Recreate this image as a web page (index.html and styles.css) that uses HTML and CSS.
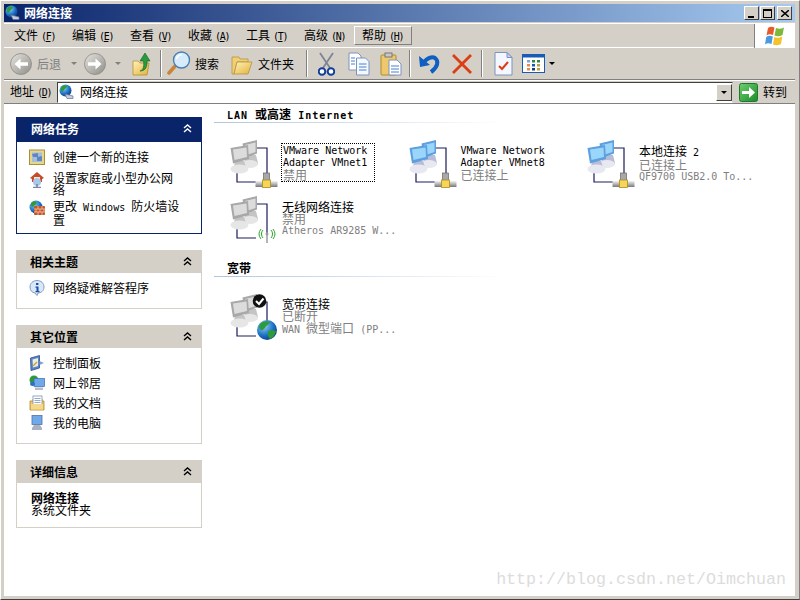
FILE: index.html
```html
<!DOCTYPE html>
<html lang="zh-CN">
<head>
<meta charset="utf-8">
<title>网络连接</title>
<link rel="stylesheet" href="styles.css">
</head>
<body>
<svg class="defs" xmlns="http://www.w3.org/2000/svg">
  <defs>
    <linearGradient id="gBall" x1="0" y1="0" x2="1" y2="1"><stop offset="0" stop-color="#e6e4de"/><stop offset="1" stop-color="#8f8d88"/></linearGradient>
    <linearGradient id="gFold" x1="0" y1="0" x2="1" y2="1"><stop offset="0" stop-color="#fff3b8"/><stop offset="1" stop-color="#e2b13c"/></linearGradient>
    <linearGradient id="gBar" x1="0" y1="0" x2="0" y2="1"><stop offset="0" stop-color="#f2f2f2"/><stop offset="1" stop-color="#777"/></linearGradient>
    <radialGradient id="gGlobe" cx=".35" cy=".3" r=".8"><stop offset="0" stop-color="#8fd0f5"/><stop offset=".6" stop-color="#1b6fc4"/><stop offset="1" stop-color="#0b3578"/></radialGradient>
    <linearGradient id="gGo" x1="0" y1="0" x2="1" y2="1"><stop offset="0" stop-color="#6fcf6f"/><stop offset="1" stop-color="#1a8a2a"/></linearGradient>

    <symbol id="pc" viewBox="0 0 48 48">
      <path d="M27 8H37V36M7 32V42H26" fill="none" stroke="#1c1c5c" stroke-width="1.2"/>
      <path d="M16 15h10l2 8c-1 4-11 5-14 1z" class="base"/>
      <ellipse cx="20" cy="24" rx="8" ry="4" class="base-lite"/>
      <path d="M12.500 3.500 27 0V13.500L15 18z" class="scr-edge"/>
      <path d="M15 5 25.500 2.500V12L16.500 15z" class="scr"/>
      <path d="M5 21h9l2 6c-2 3-10 3-12 0z" class="base"/>
      <ellipse cx="9.500" cy="29" rx="9" ry="4.500" class="base-lite"/>
      <path d="M0.500 8 18 5 19 19 3 23.500z" class="scr-edge"/>
      <path d="M3 9.500 16.500 7.500 17 17 4.500 20z" class="scr"/>
    </symbol>
    <symbol id="tee" viewBox="0 0 48 48">
      <rect x="33.500" y="33" width="6" height="9" fill="#a8a8a8" stroke="#666" stroke-width=".7"/>
      <rect x="25.500" y="41" width="22" height="6" fill="url(#gBar)"/>
      <rect x="32.500" y="40" width="8" height="7.500" fill="#f5d65a" stroke="#b08a1c" stroke-width=".8"/>
    </symbol>

    <symbol id="netconn" viewBox="0 0 16 16">
      <circle cx="6.500" cy="6.500" r="6" fill="url(#gGlobe)"/>
      <path d="M3 2c2-1 4-1 5 0 0 2-2 2-3 4-1 1-1 2-2 2-1-1-2-3 0-6z" fill="#2f9a3a"/>
      <path d="M6 10 14 12v2.500H8z" fill="#c5cbe0" stroke="#66708c" stroke-width=".7"/>
    </symbol>
    <symbol id="chev" viewBox="0 0 9 9">
      <path d="M1 4 4.500 1 8 4M1 8 4.500 5 8 8" fill="none" stroke="currentColor" stroke-width="1.400"/>
    </symbol>
    <symbol id="iNew" viewBox="0 0 16 16">
      <rect x=".5" y="1" width="15" height="14.500" fill="#e8d58e" stroke="#a88f3e"/>
      <rect x="3" y="3.500" width="10" height="9.500" fill="#a6bfd8"/>
      <path d="M3 5 9 4v4H4zM8 8l5-1v5H8z" fill="#5d87c4"/>
    </symbol>
    <symbol id="iHome" viewBox="0 0 16 16">
      <path d="M8 0 15 6 13 7V10H3V7L1 6z" fill="#c84a28"/>
      <rect x="5" y="5" width="6" height="5" fill="#f6e9d2"/>
      <circle cx="8" cy="10" r="4" fill="#a8c8ea"/>
      <path d="M8 12v3M4 15.500h8" stroke="#7a86a0" stroke-width="1.600"/>
    </symbol>
    <symbol id="iFw" viewBox="0 0 16 16">
      <circle cx="7" cy="7" r="6.500" fill="url(#gGlobe)"/>
      <path d="M3 2c2-1 4-1 5 1-1 2-3 2-4 4-2 0-3-3-1-5z" fill="#2f9a3a"/>
      <rect x="5" y="6" width="11" height="9" rx="1" fill="#c2552c"/>
      <path d="M5 9h11M5 12h11M9 6v3M13 6v3M7 9v3M11 9v3M15 9v3M9 12v3M13 12v3" stroke="#f2c9a6" stroke-width=".8"/>
    </symbol>
    <symbol id="iInfo" viewBox="0 0 16 16">
      <path d="M8 .5c4 0 7 2.700 7 6.500s-3 6-6 6l-1 2.500L6 13C3 12.500 1 10.500 1 7 1 3.200 4 .5 8 .5z" fill="#d9e7f7" stroke="#7c9cc6"/>
      <rect x="7" y="3" width="2.400" height="2" fill="#1d4fa8"/>
      <path d="M6.500 6.500h3V11h1v1.200h-4V11h1V7.700h-1z" fill="#1d4fa8"/>
    </symbol>
    <symbol id="iCtl" viewBox="0 0 16 16">
      <path d="M1.500 3 10.500 .5V13L2 15.500z" fill="#5d84c4" stroke="#2e4f8c" stroke-width=".8"/>
      <path d="M3.500 4.500 9 3V11L4 12.500z" fill="#e9efe0"/>
      <path d="M4 11 8 7" stroke="#c9a43a" stroke-width="1.500"/>
      <path d="M10.500 6 15 8 10.500 10z" fill="#7ea2d8"/>
    </symbol>
    <symbol id="iNet" viewBox="0 0 16 16">
      <circle cx="5" cy="5" r="4.500" fill="#2f9a3a"/>
      <rect x="5" y="3.500" width="10.500" height="8" fill="#6fa9ea" stroke="#3c6bb0" stroke-width=".7"/>
      <path d="M6 12.500h8v2.500H6z" fill="#b6bccb"/>
      <ellipse cx="3.500" cy="9" rx="2.500" ry="2" fill="#2a6fc8"/>
    </symbol>
    <symbol id="iDoc" viewBox="0 0 16 16">
      <path d="M1 6h3V4h9v2h2v9H1z" fill="#eec86c" stroke="#b08a2a" stroke-width=".8"/>
      <rect x="4" y="1" width="9" height="9" fill="#fff" stroke="#7d93b8" stroke-width=".8"/>
      <path d="M5.500 3.500h6M5.500 5.500h6M5.500 7.500h6" stroke="#7d93b8" stroke-width=".8"/>
      <rect x="2" y="9" width="12" height="5.500" fill="#f4d98d"/>
    </symbol>
    <symbol id="iPc" viewBox="0 0 16 16">
      <rect x="3" y=".5" width="10" height="9" fill="#6fa9ea" stroke="#56709c" stroke-width=".8"/>
      <path d="M5 10h6l2 3v2H3v-2z" fill="#aab2c4"/>
    </symbol>

    <symbol id="tbBack" viewBox="0 0 22 22">
      <circle cx="11" cy="11" r="10.500" fill="url(#gBall)" stroke="#8b8984" stroke-width=".8"/>
      <path d="M18 9.300H10.500V5.500L4.500 11l6 5.500v-3.800H18z" fill="#fff"/>
    </symbol>
    <symbol id="tbFwd" viewBox="0 0 22 22">
      <circle cx="11" cy="11" r="10.500" fill="url(#gBall)" stroke="#8b8984" stroke-width=".8"/>
      <path d="M4 9.300h7.500V5.500l6 5.500-6 5.500v-3.800H4z" fill="#fff"/>
    </symbol>
    <symbol id="tbUp" viewBox="0 0 19 24">
      <path d="M1 9h5l2 2h9L15 23H1z" fill="url(#gFold)" stroke="#b88f2c" stroke-width=".8"/>
      <path d="M8 19C12 18 12 13 11.500 9H8L13 1l5 8h-3c.5 5-1 10-7 10z" fill="#2a9a3c" stroke="#145f22" stroke-width=".6"/>
    </symbol>
    <symbol id="tbSearch" viewBox="0 0 24 25">
      <path d="M9 14 2 22" stroke="#c88438" stroke-width="3.500" stroke-linecap="round"/>
      <circle cx="14.500" cy="9" r="8" fill="#d6ecfb" stroke="#4a7fb6" stroke-width="1.400"/>
      <path d="M9.500 8a5 5 0 0 1 5-4" fill="none" stroke="#fff" stroke-width="1.600"/>
    </symbol>
    <symbol id="tbFolder" viewBox="0 0 22 22">
      <path d="M1 4h7l1 2h8v3H6L3 21H1z" fill="#f0d076" stroke="#b8923a" stroke-width=".8"/>
      <path d="M6 9h15l-4 12H3z" fill="url(#gFold)" stroke="#b8923a" stroke-width=".8"/>
    </symbol>
    <symbol id="tbCut" viewBox="0 0 17 24">
      <path d="M2 1 12 16M15 1 5 16" stroke="#7d8593" stroke-width="1.800"/>
      <circle cx="4" cy="19.500" r="3.300" fill="#fff" stroke="#123f9c" stroke-width="2"/>
      <circle cx="13" cy="19.500" r="3.300" fill="#fff" stroke="#123f9c" stroke-width="2"/>
    </symbol>
    <symbol id="tbCopy" viewBox="0 0 22 24">
      <path d="M1 1h9l3 3v14H1z" fill="#fff" stroke="#7d93bf"/>
      <path d="M8.500 6h9l3.500 3.500V23H8.500z" fill="#f4f8ff" stroke="#7d93bf"/>
      <path d="M11 12h7.500M11 15h7.500M11 18h7.500" stroke="#4b7fd0"/>
      <path d="M3 6h4M3 9h4M3 12h4" stroke="#4b7fd0"/>
    </symbol>
    <symbol id="tbPaste" viewBox="0 0 22 24">
      <rect x="1" y="3" width="15" height="20" rx="1" fill="#eec86c" stroke="#b08a2a"/>
      <rect x="5" y="1" width="7" height="4" fill="#c9c9c9" stroke="#777"/>
      <path d="M9 8h8l4 4v11H9z" fill="#fff" stroke="#7d93bf"/>
      <path d="M11 14h8M11 17h8M11 20h8" stroke="#4b7fd0"/>
    </symbol>
    <symbol id="tbUndo" viewBox="0 0 23 22">
      <path d="M5 10C9 5 14 3 17 5c4 3 3 9-4 14" fill="none" stroke="#0f5fc2" stroke-width="4"/>
      <path d="M1 3 2 14 12 12z" fill="#0f5fc2"/>
    </symbol>
    <symbol id="tbX" viewBox="0 0 22 22">
      <path d="M2 2 20 20M20 2 2 20" stroke="#dc3d12" stroke-width="2.800"/>
    </symbol>
    <symbol id="tbProps" viewBox="0 0 19 24">
      <path d="M1 .5h12l5 5V23H1z" fill="#f4f7ff" stroke="#7d93bf"/>
      <path d="M13 .5v5h5z" fill="#c5d3ee" stroke="#7d93bf"/>
      <path d="M5 14l3 3 6-7" fill="none" stroke="#dc3d12" stroke-width="2"/>
    </symbol>
    <symbol id="tbViews" viewBox="0 0 23 19">
      <rect x=".5" y=".5" width="22" height="18" fill="#fff" stroke="#1a5cb4"/>
      <rect x=".5" y=".5" width="22" height="3" fill="#1a5cb4"/>
      <path d="M5 6h3v2.500H5z" fill="#7fa6dc"/><path d="M10 6h3v2.500h-3z" fill="#2c8a3c"/><path d="M15 6h3v2.500h-3z" fill="#2c8a3c"/>
      <path d="M5 10h3v2.500H5z" fill="#e58a4a"/><path d="M10 10h3v2.500h-3z" fill="#1a5cb4"/><path d="M15 10h3v2.500h-3z" fill="#b8a33c"/>
      <path d="M5 14h3v2.500H5z" fill="#e58a4a"/><path d="M10 14h3v2.500h-3z" fill="#1a3a84"/><path d="M15 14h3v2.500h-3z" fill="#b8a33c"/>
    </symbol>
    <symbol id="winlogo" viewBox="0 0 22 20">
      <path d="M4 2C6 .5 8 .5 10.500 1.500L9 9C6.500 8 4.500 8 2.500 9.500z" fill="#e8592c"/>
      <path d="M12 2c2.500 1 5 1 8-.5L18.500 9c-3 1.500-5.500 1.500-8 .5z" fill="#7cb83c"/>
      <path d="M2.200 11C4.200 9.500 6.500 9.500 8.800 10.500L7.500 18C5 17 3 17 1 18.500z" fill="#4a9ae0"/>
      <path d="M10.300 11c2.500 1 5 1 8-.5L17 18c-3 1.500-5.500 1.500-8 .5z" fill="#f4c22c"/>
    </symbol>
  </defs>
</svg>

<div class="window">
  <header class="titlebar">
    <svg class="ico16"><use href="#netconn"/></svg>
    <span class="title-text">网络连接</span>
    <div class="winbtns">
      <span class="winbtn"><span class="g-min"></span></span>
      <span class="winbtn"><span class="g-max"></span></span>
      <span class="winbtn winbtn-close"><svg class="g-x" viewBox="0 0 8 7"><path d="M0 0 8 7M8 0 0 7" stroke="#000" stroke-width="1.500"/></svg></span>
    </div>
  </header>

  <nav class="menubar">
    <span class="menu">文件<span class="lat acc">(<u>F</u>)</span></span>
    <span class="menu">编辑<span class="lat acc">(<u>E</u>)</span></span>
    <span class="menu">查看<span class="lat acc">(<u>V</u>)</span></span>
    <span class="menu">收藏<span class="lat acc">(<u>A</u>)</span></span>
    <span class="menu">工具<span class="lat acc">(<u>T</u>)</span></span>
    <span class="menu">高级<span class="lat acc">(<u>N</u>)</span></span>
    <span class="menu menu-on">帮助<span class="lat acc">(<u>H</u>)</span></span>
    <span class="logo"><svg class="logo-svg"><use href="#winlogo"/></svg></span>
  </nav>

  <div class="toolbar">
    <svg class="t22 m6"><use href="#tbBack"/></svg>
    <span class="tb-label muted m5">后退</span>
    <span class="caret caret-gray m10"></span>
    <svg class="t22 m7"><use href="#tbFwd"/></svg>
    <span class="caret caret-gray m9"></span>
    <svg class="t-up m11"><use href="#tbUp"/></svg>
    <span class="sep m9"></span>
    <svg class="t-search m5"><use href="#tbSearch"/></svg>
    <span class="tb-label m4">搜索</span>
    <svg class="t22 m12"><use href="#tbFolder"/></svg>
    <span class="tb-label m5">文件夹</span>
    <span class="sep m12"></span>
    <svg class="t-cut m10"><use href="#tbCut"/></svg>
    <svg class="t-copy m13"><use href="#tbCopy"/></svg>
    <svg class="t-copy m10"><use href="#tbPaste"/></svg>
    <span class="sep m7"></span>
    <svg class="t-undo m7"><use href="#tbUndo"/></svg>
    <svg class="t22 m10"><use href="#tbX"/></svg>
    <span class="sep m8"></span>
    <svg class="t-up m11"><use href="#tbProps"/></svg>
    <svg class="t-views m9"><use href="#tbViews"/></svg>
    <span class="caret m4"></span>
  </div>

  <div class="addressbar">
    <span class="addr-label">地址<span class="lat acc">(<u>D</u>)</span></span>
    <div class="addr-input">
      <svg class="ico16"><use href="#netconn"/></svg>
      <span class="addr-text">网络连接</span>
      <span class="addr-drop"><span class="caret"></span></span>
    </div>
    <svg class="go-ico" viewBox="0 0 19 19"><rect x=".5" y=".5" width="18" height="18" rx="2" fill="url(#gGo)" stroke="#1d7a2a"/><path d="M3 8h7V4l6 5.500-6 5.500v-4H3z" fill="#fff"/></svg>
    <span class="go-text">转到</span>
  </div>

  <div class="content">
    <aside class="sidebar">
      <section class="panel panel-main">
        <h2 class="panel-head">网络任务<svg class="chev"><use href="#chev"/></svg></h2>
        <div class="panel-body">
          <div class="row"><svg class="ico16"><use href="#iNew"/></svg><span class="row-text">创建一个新的连接</span></div>
          <div class="row row-two"><svg class="ico16"><use href="#iHome"/></svg><span class="row-text">设置家庭或小型办公网络</span></div>
          <div class="row row-two"><svg class="ico16"><use href="#iFw"/></svg><span class="row-text">更改<span class="lat"> Windows </span>防火墙设置</span></div>
        </div>
      </section>
      <section class="panel">
        <h2 class="panel-head">相关主题<svg class="chev"><use href="#chev"/></svg></h2>
        <div class="panel-body">
          <div class="row"><svg class="ico16"><use href="#iInfo"/></svg><span class="row-text">网络疑难解答程序</span></div>
        </div>
      </section>
      <section class="panel">
        <h2 class="panel-head">其它位置<svg class="chev"><use href="#chev"/></svg></h2>
        <div class="panel-body">
          <div class="row"><svg class="ico16"><use href="#iCtl"/></svg><span class="row-text">控制面板</span></div>
          <div class="row"><svg class="ico16"><use href="#iNet"/></svg><span class="row-text">网上邻居</span></div>
          <div class="row"><svg class="ico16"><use href="#iDoc"/></svg><span class="row-text">我的文档</span></div>
          <div class="row"><svg class="ico16"><use href="#iPc"/></svg><span class="row-text">我的电脑</span></div>
        </div>
      </section>
      <section class="panel">
        <h2 class="panel-head">详细信息<svg class="chev"><use href="#chev"/></svg></h2>
        <div class="panel-body details">
          <strong>网络连接</strong>
          <span>系统文件夹</span>
        </div>
      </section>
    </aside>

    <main class="main">
      <h3 class="group-head"><span class="lat">LAN </span>或高速<span class="lat"> Internet</span></h3>
      <div class="tiles">
        <div class="tile">
          <svg class="net-ico net-off"><use href="#pc"/><use href="#tee"/></svg>
          <div class="tile-text focus"><span class="lat">VMware Network Adapter VMnet1</span><span class="sub">禁用</span></div>
        </div>
        <div class="tile">
          <svg class="net-ico net-on"><use href="#pc"/><use href="#tee"/></svg>
          <div class="tile-text"><span class="lat">VMware Network Adapter VMnet8</span><span class="sub">已连接上</span></div>
        </div>
        <div class="tile">
          <svg class="net-ico net-on"><use href="#pc"/><use href="#tee"/></svg>
          <div class="tile-text"><span class="name">本地连接<span class="lat"> 2</span></span><span class="sub">已连接上</span><span class="sub lat">QF9700 USB2.0 To...</span></div>
        </div>
        <div class="tile">
          <svg class="net-ico net-off" viewBox="0 0 48 48"><use href="#pc" width="48" height="48"/>
            <path d="M37 36v2" stroke="#1c1c5c"/>
            <path d="M37 38v9" stroke="#9a9aa8" stroke-width="1.500"/>
            <circle cx="37" cy="38" r="1.500" fill="#9a9aa8"/>
            <path d="M33 34a6 6 0 0 0 0 8M41 34a6 6 0 0 1 0 8M31 33a8 8 0 0 0 0 10M43 33a8 8 0 0 1 0 10" fill="none" stroke="#2aa82a" stroke-width="1"/>
          </svg>
          <div class="tile-text"><span class="name">无线网络连接</span><span class="sub">禁用</span><span class="sub lat">Atheros AR9285 W...</span></div>
        </div>
      </div>

      <h3 class="group-head group-next">宽带</h3>
      <div class="tiles">
        <div class="tile">
          <svg class="net-ico net-off" viewBox="0 0 48 48"><use href="#pc" width="48" height="48"/>
            <circle cx="37" cy="36" r="10" fill="url(#gGlobe)"/>
            <path d="M31 29c3-2 7-2 9-1-1 3-4 3-5 6-2 1-2 3-4 2-3-2-2-5 0-7zM38 37c3-1 6-1 8 0-1 4-3 7-6 8-2-2-3-6-2-8z" fill="#2f9a3a"/>
            <circle cx="29.500" cy="7" r="6.800" fill="#111"/>
            <path d="M26 7l3 3 4.500-5.500" fill="none" stroke="#fff" stroke-width="2"/>
          </svg>
          <div class="tile-text"><span class="name">宽带连接</span><span class="sub">已断开</span><span class="sub"><span class="lat">WAN </span>微型端口<span class="lat"> (PP...</span></span></div>
        </div>
      </div>
      <div class="watermark">http://blog.csdn.net/Oimchuan</div>
    </main>
  </div>
</div>
</body>
</html>
```

FILE: styles.css
```css
* { box-sizing: border-box; }
html, body { margin: 0; padding: 0; }
body {
  width: 800px; height: 600px; overflow: hidden;
  background: #d4d0c8; color: #000;
  font: 12px/12px "Noto Sans CJK SC", sans-serif;
}
svg { display: block; flex: none; }
.defs { width: 0; height: 0; }
.lat { font-family: "DejaVu Sans Mono", monospace; font-size: 10px; line-height: 12px; white-space: pre-wrap; }
.acc { margin-left: 3px; letter-spacing: -1.3px; white-space: pre; }
.ico16 { width: 16px; height: 16px; }

.window {
  width: 800px; height: 600px;
  padding: 4px 4px 3px 3px;
  display: flex; flex-direction: column;
  border-bottom: 1px solid #404040;
  border-right: 1px solid #808080;
  border-top: 1px solid #fff;
  border-left: 1px solid #fff;
}

.titlebar {
  height: 18px; flex: none; margin-top: -1px;
  display: flex; align-items: center; gap: 3px;
  padding: 0 3px 0 1px;
  background: linear-gradient(90deg, #0a246a, #a6caf0);
  color: #fff; font-weight: 700;
}
.winbtns { margin-left: auto; display: flex; gap: 1px; }
.winbtn {
  width: 15px; height: 14px; background: #d4d0c8;
  border: 1px solid; border-color: #fff #404040 #404040 #fff;
  display: flex; align-items: center; justify-content: center;
}
.winbtn-close { margin-left: 1px; }
.g-min { width: 6px; height: 2px; background: #000; margin-top: 7px; margin-right: 2px; }
.g-max { width: 9px; height: 9px; border: 1px solid #000; border-top-width: 2px; }
.g-x { width: 8px; height: 7px; }

.menubar {
  height: 25px; flex: none; margin-top: 1px;
  display: flex; align-items: center;
  padding-left: 2px;
  border-top: 1px solid #fff; border-bottom: 1px solid #fff;
}
.menu { width: 58px; white-space: nowrap; padding: 1px 0 0 8px; }
.menu-on {
  height: 19px; line-height: 16px; padding: 0 0 0 7px;
  border: 1px solid; border-color: #fff #808080 #808080 #fff;
}
.logo {
  margin-left: auto; width: 41px; height: 24px; background: #fff;
  display: flex; align-items: center; justify-content: center;
  border-left: 1px solid #808080;
}
.logo-svg { width: 22px; height: 20px; }

.toolbar {
  height: 32px; flex: none;
  display: flex; align-items: center;
  border-bottom: 1px solid #808080;
}
.t22 { width: 22px; height: 22px; }
.t-up { width: 19px; height: 24px; }
.t-search { width: 24px; height: 25px; }
.t-cut { width: 17px; height: 24px; }
.t-copy { width: 22px; height: 24px; }
.t-undo { width: 23px; height: 22px; }
.t-views { width: 23px; height: 19px; }
.tb-label { white-space: nowrap; }
.muted { color: #808080; }
.sep { width: 2px; height: 27px; border-left: 1px solid #808080; border-right: 1px solid #fff; }
.caret { width: 0; height: 0; border: 3px solid transparent; border-top: 3px solid #000; border-bottom: 0; }
.caret-gray { border-top-color: #808080; }
.m4 { margin-left: 4px; } .m5 { margin-left: 5px; } .m6 { margin-left: 6px; } .m7 { margin-left: 7px; }
.m8 { margin-left: 8px; } .m9 { margin-left: 9px; } .m10 { margin-left: 10px; } .m11 { margin-left: 11px; }
.m12 { margin-left: 12px; } .m13 { margin-left: 13px; }

.addressbar {
  height: 24px; flex: none;
  display: flex; align-items: center;
  border-top: 1px solid #fff; border-bottom: 1px solid #808080;
  padding-left: 6px;
}
.addr-label { width: 47px; white-space: nowrap; }
.addr-input {
  width: 676px; height: 21px; background: #fff;
  display: flex; align-items: center; gap: 5px;
  padding-left: 1px;
  border: 1px solid; border-color: #404040 #d4d0c8 #fff #404040;
}
.addr-drop {
  margin-left: auto; width: 16px; height: 17px; background: #d4d0c8;
  border: 1px solid; border-color: #fff #404040 #404040 #fff;
  display: flex; align-items: center; justify-content: center;
}
.go-ico { width: 19px; height: 19px; margin-left: 6px; }
.go-text { margin-left: 5px; }

.content { flex: 1; min-height: 0; display: flex; background: #fff; position: relative; }

.sidebar {
  width: 210px; flex: none;
  padding: 13px 12px 0 12px;
  display: flex; flex-direction: column; gap: 16px;
}
.panel-head {
  margin: 0; height: 23px; padding: 0 10px 0 14px;
  background: #d4d0c8; font-size: 12px; font-weight: 700;
  display: flex; align-items: center; justify-content: space-between;
}
.chev { width: 9px; height: 9px; color: #000; }
.panel-body {
  border: 1px solid #d4d0c8; border-top: 0;
  padding: 5px 12px 10px;
}
.panel-main .panel-head { height: 25px; background: #0a246a; color: #fff; padding: 0 10px 2px 15px; }
.panel-main .chev { color: #fff; }
.panel-main .panel-body { border-color: #0a246a; }
.row { min-height: 20px; display: flex; gap: 8px; align-items: center; }
.row-two { height: 28px; padding-top: 5px; align-items: flex-start; }
.row-text { width: 128px; }
.details { display: flex; flex-direction: column; padding: 9px 14px 11px; }
.details strong { font-weight: 700; }

.main { flex: 1; min-width: 0; padding-top: 4px; }
.group-head {
  margin: 0; height: 15px; padding-left: 13px; font-size: 12px; font-weight: 700;
  border-bottom: 1px solid transparent;
  border-image: linear-gradient(90deg, #b0c4de, #fff 50%) 1;
}
.group-head .lat { font-weight: 700; letter-spacing: 1px; }
.group-next { margin-top: 10px; }
.tiles { display: grid; grid-template-columns: repeat(3, 178.5px); grid-auto-rows: 56px; padding-top: 17px; }
.tile { display: flex; align-items: flex-start; padding-left: 16px; gap: 4px; }
.net-ico { width: 48px; height: 48px; }
.tile-text { width: 120px; flex: none; margin-top: 5px; display: flex; flex-direction: column; }
.group-next + .tiles .tile-text { margin-top: 4px; }
.focus { width: 92px; height: 37px; margin-top: 4px; padding: 1px 0 0 1px; outline: 1px dotted #000; }
.name { display: block; }
.sub { color: #808080; display: block; }
.net-off { --scr: #dcdcdc; --scr-edge: #a8a8a8; --base: #c4c4c4; --base-lite: #e6e6e6; }
.net-on { --scr: #9ad6fa; --scr-edge: #5e9fe0; --base: #b8bcd8; --base-lite: #e8e8f0; }
.scr { fill: var(--scr); }
.scr-edge { fill: var(--scr-edge); }
.base { fill: var(--base); }
.base-lite { fill: var(--base-lite); }

.watermark {
  position: absolute; right: 9px; bottom: 6px;
  font: 16.67px/20px "Liberation Mono", monospace; color: #dcdcdc;
}
```
